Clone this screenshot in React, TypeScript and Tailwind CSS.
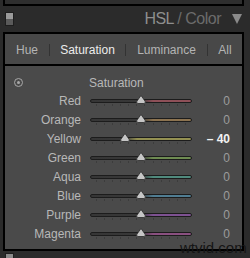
import React from "react";

interface Channel {
    name: string;
    value: number;
    color: string;
}

const channels: Channel[] = [
    { name: "Red", value: 0, color: "#8e5058" },
    { name: "Orange", value: 0, color: "#8c7350" },
    { name: "Yellow", value: -40, color: "#939052" },
    { name: "Green", value: 0, color: "#6e8b52" },
    { name: "Aqua", value: 0, color: "#508a7d" },
    { name: "Blue", value: 0, color: "#507d92" },
    { name: "Purple", value: 0, color: "#7e5292" },
    { name: "Magenta", value: 0, color: "#8a5080" },
];

function Thumb() {
    return (
        <svg width="11" height="9" viewBox="0 0 11 9" className="block">
            <path d="M5.5 0.5 L9.6 6.2 Q10.6 8.5 8.4 8.5 L2.6 8.5 Q0.4 8.5 1.4 6.2 Z" fill="#c6c6c6" stroke="#2a2a2a" strokeWidth="0.8" />
        </svg>
    );
}

function Slider({ value, color }: { value: number; color: string }) {
    const pos = 50 + value * 0.4;
    return (
        <div className="relative w-[102px] h-[19px]">
            <div
                className="absolute left-0 right-0 top-[8px] h-[4px] rounded-full border border-[#1c1c1c]"
                style={{ background: `linear-gradient(to right, #363636 0%, #383838 ${pos}%, ${color} ${Math.min(pos + 12, 100)}%, ${color} 100%)` }}
            />
            <div className="absolute left-[6px] right-[6px] top-[13px] flex justify-between">
                {Array.from({ length: 12 }).map((_, i) => (
                    <div key={i} className="w-px h-[2px] bg-[#3c3c3c]" />
                ))}
            </div>
            <div className="absolute top-[4px] -translate-x-1/2" style={{ left: `${pos}%` }}>
                <Thumb />
            </div>
        </div>
    );
}

export default function App() {
    return (
        <div className="relative w-[250px] h-[258px] overflow-hidden bg-[#2b2b2b] font-['Liberation_Sans',Arial,sans-serif]">
            {/* previous panel edge */}
            <div className="ml-[3px] w-[241px] h-[6px] border-b-2 border-x-2 border-black bg-[#2e2e2e]" />

            {/* panel header */}
            <div className="h-[26px] flex items-center pl-[5px] pr-[8px]">
                <div className="w-[9px] h-[14px] border border-[#1e1e1e] flex flex-col">
                    <div className="flex-1 bg-[#9a9a9a]" />
                    <div className="flex-1 bg-[#5a5a5a]" />
                </div>
                <div className="flex-1" />
                <div className="text-[16px] leading-none tracking-[-0.5px]">
                    <span className="text-[#8e8e8e]">HSL</span>
                    <span className="text-[#6c6c6c]"> / Color</span>
                </div>
                <div className="ml-[11px] w-0 h-0 border-l-[5px] border-r-[5px] border-t-[10px] border-l-transparent border-r-transparent border-t-[#8a8a8a]" />
            </div>

            <div className="ml-[3px] w-[241px] border-x-2 border-b-2 border-black">
                {/* tabs */}
                <div className="h-[34px] border-y-2 border-black bg-[#484848] flex items-center text-[12px] text-[#b4b4b4] pt-[2px]">
                    <div className="w-[44px] text-center">Hue</div>
                    <div className="w-px h-[12px] bg-[#333]" />
                    <div className="w-[75px] text-center text-[#ececec]">Saturation</div>
                    <div className="w-px h-[12px] bg-[#333]" />
                    <div className="w-[81px] text-center">Luminance</div>
                    <div className="w-px h-[12px] bg-[#333]" />
                    <div className="flex-1 text-center">All</div>
                </div>

                {/* content */}
                <div className="h-[183px] bg-[#4a4a4a]">
                    <div className="h-[25px] pt-[8px] flex items-center">
                        <div className="ml-[9px] w-[9px] h-[9px] rounded-full border border-[#a8a8a8] flex items-center justify-center">
                            <div className="w-[3px] h-[3px] rounded-full bg-[#a8a8a8]" />
                        </div>
                        <div className="ml-[66px] text-[12px] text-[#b8b8b8] leading-[14px]">Saturation</div>
                    </div>
                    {channels.map((c) => (
                        <div key={c.name} className="h-[19px] flex items-center text-[12px]">
                            <div className="w-[76px] text-right text-[#b8b8b8]">{c.name}</div>
                            <div className="ml-[9px]">
                                <Slider value={c.value} color={c.color} />
                            </div>
                            <div className={`w-[38px] text-right ${c.value !== 0 ? "text-[#f2f2f2] font-bold" : "text-[#9c9c9c]"}`}>
                                {c.value === 0 ? "0" : `– ${Math.abs(c.value)}`}
                            </div>
                        </div>
                    ))}
                </div>
            </div>

            {/* next panel icon */}
            <div className="ml-[5px] mt-[2px] w-[9px] h-[14px] border border-[#1e1e1e] flex flex-col">
                <div className="flex-1 bg-[#8a8a8a]" />
                <div className="flex-1 bg-[#5a5a5a]" />
            </div>

            <div className="absolute left-[180px] top-[240px] text-[15px] leading-[16px] text-[#151515]">wtvid.com</div>
        </div>
    );
}
